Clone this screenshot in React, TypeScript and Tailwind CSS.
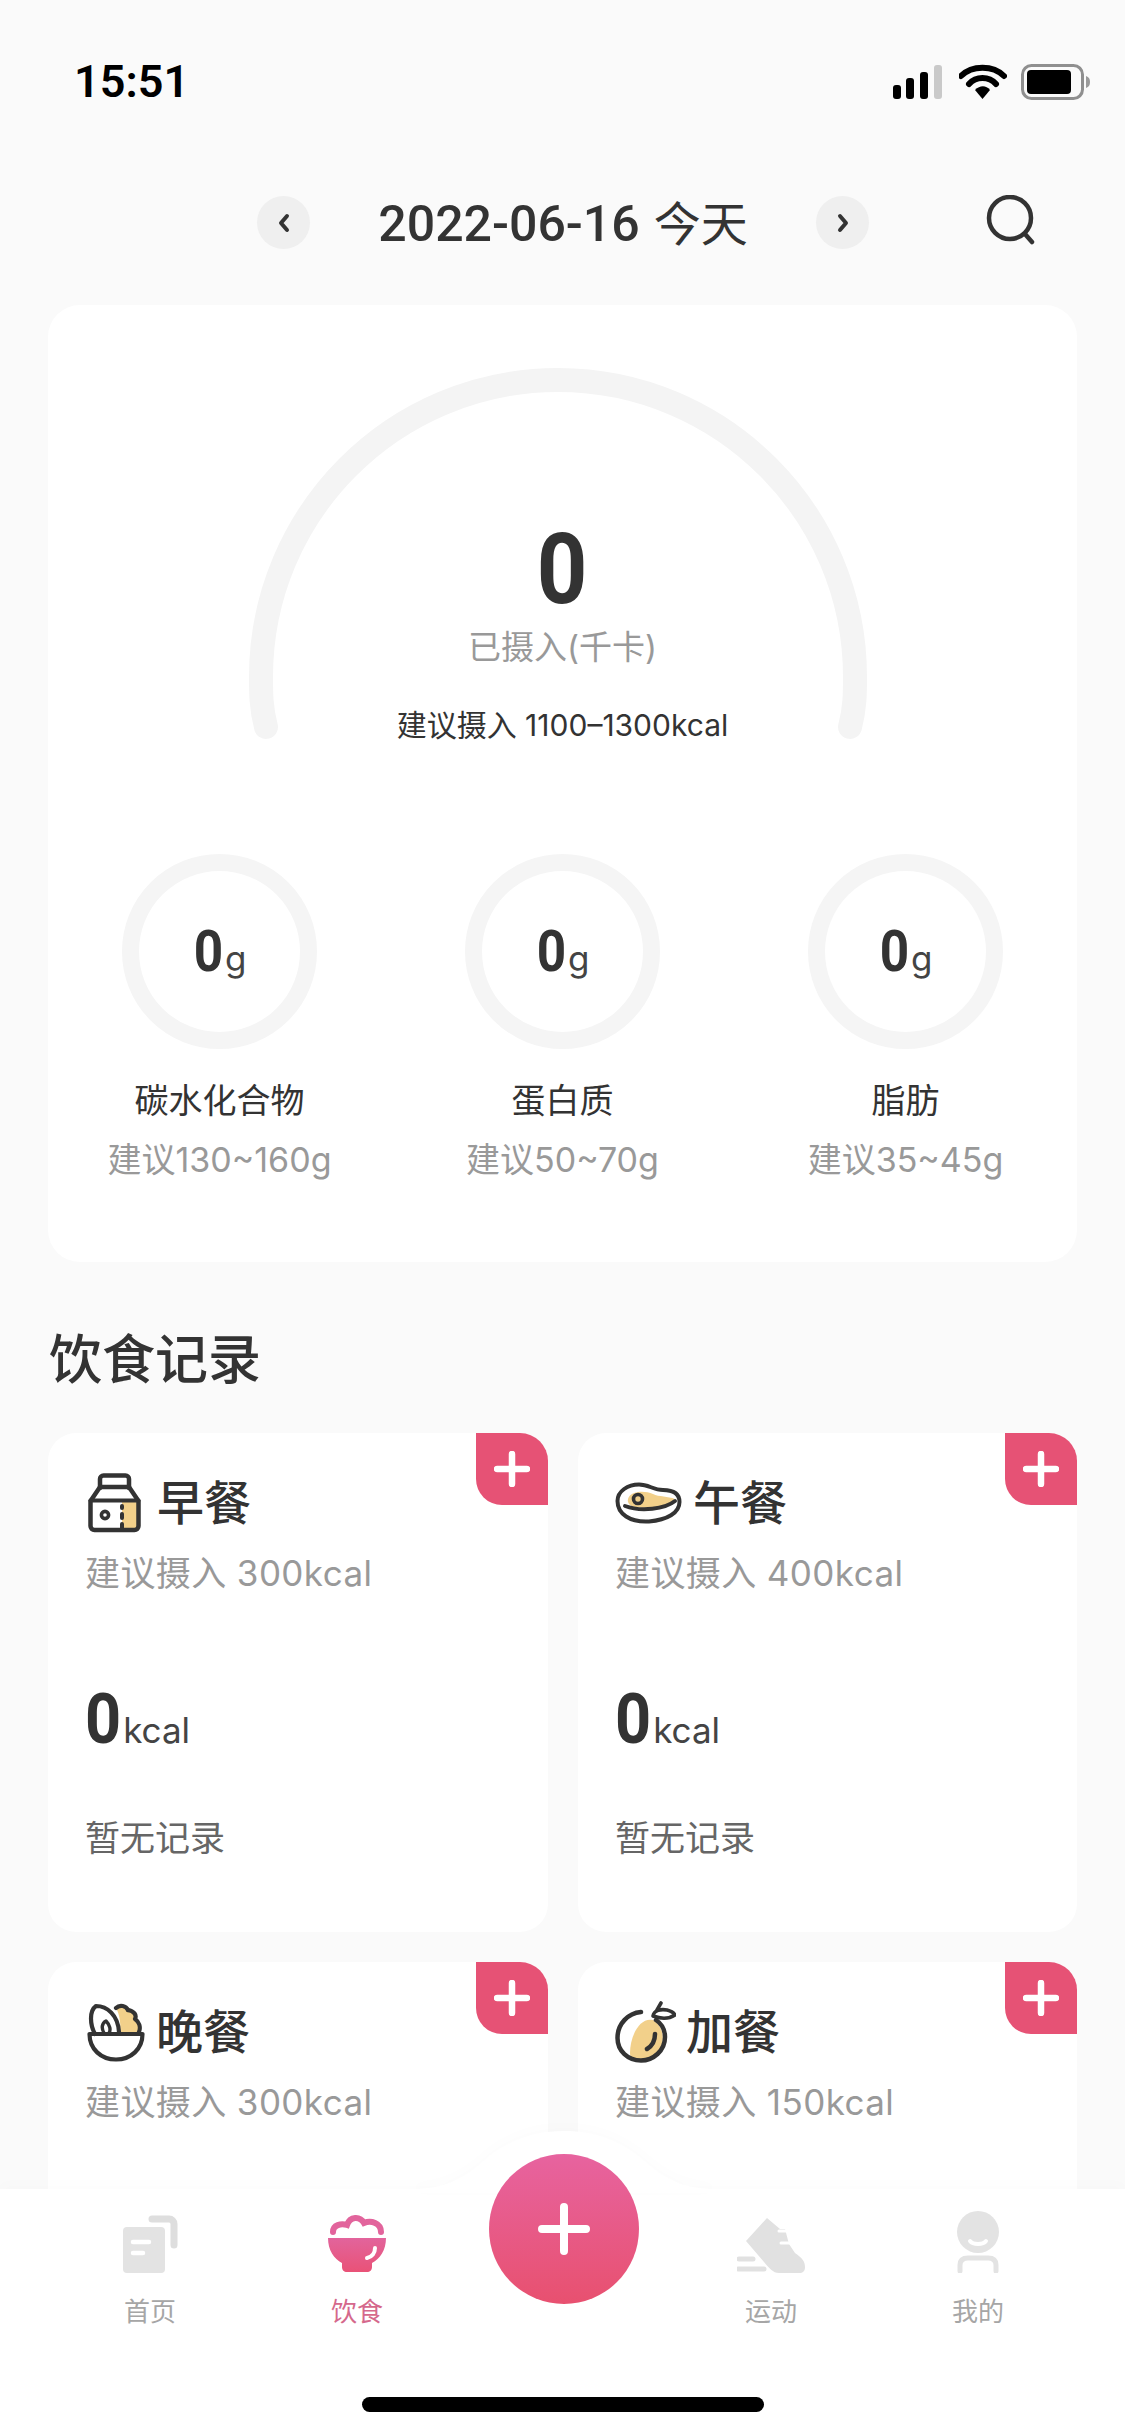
import React from "react";

const Plus = () => (
  <svg width="36" height="36" viewBox="0 0 36 36">
    <path d="M18 3V33M3 18H33" stroke="#fff" strokeWidth="6.5" strokeLinecap="round" />
  </svg>
);

const Milk = () => (
  <svg width="53" height="60" viewBox="0 0 53 60" fill="none" className="ml-[3px] mr-[16px]">
    <rect x="34" y="29" width="15" height="26" fill="#f2d08a" />
    <g stroke="#333" strokeWidth="4.5" strokeLinejoin="round" strokeLinecap="round">
      <path d="M12 15V6a3.5 3.5 0 0 1 3.5-3.5h22a3.5 3.5 0 0 1 3.5 3.5V15" />
      <path d="M12 14H41L50.5 28V53a4 4 0 0 1-4 4H6.5a4 4 0 0 1-4-4V28Z" />
      <path d="M2.5 27.5H50.5" strokeWidth="4" />
      <path d="M34 41V45" strokeWidth="4" />
      <path d="M34 33V35M34 51V55" strokeWidth="4" />
      <circle cx="17" cy="42" r="3.6" strokeWidth="3.6" />
    </g>
  </svg>
);

const Steak = () => (
  <svg width="67" height="42" viewBox="0 0 67 42" fill="none" className="mr-[11px]">
    <path d="M13 17C15 9 29 8 38 12C44 15 53 14 60 17C53 25 30 27 20 25C15 24 12 21 13 17Z" fill="#f2d08a" />
    <g stroke="#333" strokeLinecap="round">
      <path d="M2.5 19C2.5 9 13 2.5 24 2.5C34 2.5 38 8 48 8C58 8 64.5 11 64.5 20C64.5 31 52 38 34 39.5C15 40.500 2.5 32 2.500 19Z" strokeWidth="4" />
      <path d="M10 24C26 30 50 27 60 19" strokeWidth="4" />
      <circle cx="23" cy="17" r="4.500" strokeWidth="3.600" />
    </g>
  </svg>
);

const Bowl = () => (
  <svg width="58" height="59" viewBox="0 0 58 59" fill="none" className="ml-[2px] mr-[11px]">
    <path d="M29 5C33 1 39 3 41 7C47 8 50 12 48 16C52 19 53 24 52 31H33C34 22 33 12 29 5Z" fill="#f2d08a" />
    <g stroke="#333" strokeWidth="4.2" strokeLinecap="round" strokeLinejoin="round">
      <path d="M2.500 31H55.500C55.500 46 44 56.500 29 56.500C14 56.500 2.500 46 2.500 31Z" />
      <path d="M8 31C3 22 2 8 9 3C20 3 31 12 32 29" />
      <path d="M17 30C14 25 15 20 19 18C23 22 24 27 22 30" strokeWidth="3.400" />
      <path d="M29 5C33 1 39 3 41 7" />
      <path d="M41 7C47 8 50 12 48 16C52 19 54 24 52 29" />
    </g>
  </svg>
);

const Orange = () => (
  <svg width="61" height="62" viewBox="0 0 61 62" fill="none" className="mr-[10px]">
    <path d="M38 19C50 26 52 46 38 56C26 62 15 61 15 52C15 36 24 16 38 19Z" fill="#f2d08a" />
    <g stroke="#333" strokeLinecap="round" strokeLinejoin="round">
      <path d="M26 11C13 12 2.500 23 2.500 37C2.500 50 13 59.500 26 59.500C38 59.500 50 50 50 36C50 29 47 23 41 19" strokeWidth="4.500" />
      <path d="M38 15C39 9 46 8 52 9C56 10 59 12 60 14C54 18 46 18 38 15ZM42 9L46 2" strokeWidth="3.600" />
      <path d="M40 33C40 39 37 45 32 48" strokeWidth="4.500" />
    </g>
  </svg>
);

const meals = [
  { name: "早餐", icon: <Milk />, rec: "300" },
  { name: "午餐", icon: <Steak />, rec: "400" },
  { name: "晚餐", icon: <Bowl />, rec: "300" },
  { name: "加餐", icon: <Orange />, rec: "150" },
];

const macros = [
  { name: "碳水化合物", rec: "建议130~160g" },
  { name: "蛋白质", rec: "建议50~70g" },
  { name: "脂肪", rec: "建议35~45g" },
];

const Tab = ({ label, active, icon }: { label: string; active?: boolean; icon: React.ReactNode }) => (
  <div className="flex w-[120px] flex-col items-center">
    <div className="flex h-[62px] items-end justify-center">{icon}</div>
    <div className={`mt-[22px] text-[26px] leading-[34px] ${active ? "text-[#d5688c]" : "text-[#a6a6a6]"}`}>{label}</div>
  </div>
);

export default function App() {
  return (
    <div className="relative h-[2436px] w-[1125px] overflow-hidden bg-[#fafafa] [font-family:Inter,'Noto_Sans_CJK_SC',sans-serif] text-[#333]">
      {/* status bar */}
      <div className="flex h-[196px] items-start justify-between pl-[74px] pr-[34px] pt-[57px]">
        <div className="text-[45px] font-semibold leading-[50px] text-black [font-family:Roboto,sans-serif]">15:51</div>
        <div className="mt-[7px] flex items-center">
          <svg width="52" height="36" viewBox="0 0 52 36">
            <rect x="1" y="21" width="8" height="14" rx="3" fill="#000" />
            <rect x="14" y="14" width="8" height="21" rx="3" fill="#000" />
            <rect x="28" y="8" width="8" height="27" rx="3" fill="#000" />
            <rect x="42" y="1" width="8" height="34" rx="3" fill="#c9c9c9" />
          </svg>
          <svg width="48" height="36" viewBox="0 0 48 36" className="ml-[15px]">
            <path d="M2 12C13 1 34 1 45 12" fill="none" stroke="#000" strokeWidth="6" strokeLinecap="round" />
            <path d="M10 20C17 12 30 12 37 20" fill="none" stroke="#000" strokeWidth="6" strokeLinecap="round" />
            <path d="M16 26C21 21 27 21 31 26L23.500 35Z" fill="#000" />
          </svg>
          <svg width="70" height="36" viewBox="0 0 70 36" className="ml-[14px]">
            <rect x="1.500" y="1.500" width="60" height="33" rx="9" fill="none" stroke="#8f8f8f" strokeWidth="3" />
            <rect x="6" y="6" width="44" height="24" rx="4" fill="#000" />
            <path d="M65 12C68 13 69 15 69 18C69 21 68 23 65 24Z" fill="#9a9a9a" />
          </svg>
        </div>
      </div>

      {/* date header */}
      <div className="flex h-[53px] items-center pl-[257px]">
        <div className="flex h-[53px] w-[53px] items-center justify-center rounded-full bg-[#efefef]">
          <svg width="14" height="20" viewBox="0 0 14 20"><path d="M10 3L4 10L10 17" fill="none" stroke="#333" strokeWidth="4" strokeLinecap="round" strokeLinejoin="round" /></svg>
        </div>
        <div className="flex w-[506px] items-baseline justify-center text-[#333]">
          <span className="text-[50px] font-medium leading-[53px] [font-family:Roboto,sans-serif]">2022-06-16</span>
          <span className="ml-[14px] text-[47px] leading-[53px] [font-family:'Noto_Sans_CJK_SC',sans-serif]">今天</span>
        </div>
        <div className="flex h-[53px] w-[53px] items-center justify-center rounded-full bg-[#efefef]">
          <svg width="14" height="20" viewBox="0 0 14 20"><path d="M4 3L10 10L4 17" fill="none" stroke="#333" strokeWidth="4" strokeLinecap="round" strokeLinejoin="round" /></svg>
        </div>
        <svg width="52" height="50" viewBox="0 0 52 50" className="ml-[116px] -mt-[5px]">
          <circle cx="25" cy="23" r="21" fill="none" stroke="#333" strokeWidth="4.500" />
          <path d="M40 39L47 47" stroke="#333" strokeWidth="4.500" strokeLinecap="round" />
        </svg>
      </div>

      {/* summary card */}
      <div className="mx-[48px] mt-[56px] h-[957px] w-[1029px] rounded-[32px] bg-white pt-[63px]">
        <div className="relative h-[372px] text-center">
          <svg width="618" height="374" viewBox="0 0 618 374" className="absolute left-[201px] top-0">
            <path d="M17 359C12 340 12 325 12 309C12 145 145 12 309 12C473 12 606 145 606 309C606 325 606 340 601 359" fill="none" stroke="#f4f4f4" strokeWidth="24" strokeLinecap="round" />
          </svg>
          <div className="relative h-[265px] pt-[139px] leading-[126px]">
            <span className="inline-block scale-x-90 text-[98px] font-bold [font-family:Roboto,sans-serif]">0</span>
          </div>
          <div className="relative -mt-[9px] text-[33px] leading-[46px] text-[#999]">已摄入(千卡)</div>
          <div className="relative mt-[35px] text-[30px] leading-[40px] text-[#333]">建议摄入 1100–1300kcal</div>
        </div>
        <div className="mt-[114px] grid grid-cols-3">
          {macros.map((m) => (
            <div key={m.name} className="flex flex-col items-center">
              <div className="flex h-[195px] w-[195px] items-baseline justify-center rounded-full border-[17px] border-[#f5f5f5] pt-[49px]">
                <span className="inline-block scale-x-90 text-[57px] font-bold leading-[64px] [font-family:Roboto,sans-serif]">0</span>
                <span className="text-[35px] leading-[64px] text-[#444]">g</span>
              </div>
              <div className="mt-[28px] text-[34px] leading-[48px] text-[#333]">{m.name}</div>
              <div className="mt-[11px] text-[34px] leading-[48px] text-[#999]">{m.rec}</div>
            </div>
          ))}
        </div>
      </div>

      <div className="ml-[49px] mt-[63px] text-[53px] font-medium leading-[70px] text-[#333]">饮食记录</div>

      {/* meals */}
      <div className="mx-[48px] mt-[38px] grid grid-cols-[500px_499px] gap-x-[30px] gap-y-[30px]">
        {meals.map((m) => (
          <div key={m.name} className="relative h-[499px] rounded-[28px] bg-white pl-[37px] pt-[40px]">
            <div className="absolute right-0 top-0 flex h-[72px] w-[72px] items-center justify-center rounded-bl-[26px] rounded-tr-[28px] bg-[#e65275]">
              <Plus />
            </div>
            <div className="flex h-[60px] items-center">
              {m.icon}
              <span className="text-[47px] font-medium leading-[60px] text-[#333]">{m.name}</span>
            </div>
            <div className="mt-[16px] text-[35px] leading-[48px] tracking-[0.4px] text-[#999]">建议摄入 {m.rec}kcal</div>
            <div className="mt-[82px] flex items-baseline leading-[80px]">
              <span className="inline-block origin-left scale-x-90 text-[70px] font-bold [font-family:Roboto,sans-serif]">0</span>
              <span className="-ml-[2px] text-[35px] text-[#444]">kcal</span>
            </div>
            <div className="mt-[44px] text-[35px] leading-[48px] text-[#666]">暂无记录</div>
          </div>
        ))}
      </div>

      {/* tab bar */}
      <div className="absolute bottom-0 left-0 h-[247px] w-[1125px] bg-white shadow-[0_-6px_12px_rgba(0,0,0,0.012)]">
        <svg width="300" height="64" viewBox="0 0 300 64" className="absolute -top-[60px] left-[414px] drop-shadow-[0_-3px_6px_rgba(0,0,0,0.012)]">
          <path d="M0 60C30 60 50 50 70 32C92 12 120 2 150 2C180 2 208 12 230 32C250 50 270 60 300 60V64H0Z" fill="#fff" />
        </svg>
        <div className="relative flex pt-[22px]">
          <div className="ml-[90px]"><Tab label="首页" icon={
            <svg width="56" height="58" viewBox="0 0 56 58">
              <path d="M30 4H47a5 5 0 0 1 5 5V30" fill="none" stroke="#dedede" strokeWidth="7" strokeLinecap="round" />
              <rect x="1" y="12" width="42" height="46" rx="4" fill="#e3e3e3" />
              <path d="M11 27H27M11 38H21" stroke="#fff" strokeWidth="4.500" strokeLinecap="round" />
            </svg>
          } /></div>
          <div className="ml-[87px]"><Tab label="饮食" active icon={
            <svg width="60" height="59" viewBox="0 0 60 59">
              <defs>
                <linearGradient id="rice" x1="0" y1="0" x2="0" y2="1">
                  <stop offset="0" stopColor="#e2649c" />
                  <stop offset="1" stopColor="#e95277" />
                </linearGradient>
              </defs>
              <path d="M6 18C6 11 14 9 20 11C23 2 33 2 37 9C44 6 54 9 54 18" fill="none" stroke="#e2649c" strokeWidth="6" strokeLinecap="round" />
              <path d="M1 24H59C59 36 53 45 45 49V53C45 56 43 58 40 58H20C17 58 15 56 15 53V49C7 45 1 36 1 24Z" fill="url(#rice)" />
              <path d="M48 34C48 39 45 43 40 44" fill="none" stroke="#fff" strokeWidth="4" strokeLinecap="round" />
            </svg>
          } /></div>
          <div className="ml-[294px]"><Tab label="运动" icon={
            <svg width="68" height="56" viewBox="0 0 68 56">
              <path d="M30 1L43 12H48L52 27L58 36C65 41 68 44 68 50C68 54 66 56 62 56H42C36 56 32 51 27 45L9 24Z" fill="#e1e1e1" />
              <path d="M42 14H50M44 26H54" stroke="#fff" strokeWidth="3" strokeLinecap="round" />
              <path d="M2 42H16M1 52H27" stroke="#e1e1e1" strokeWidth="5" strokeLinecap="round" />
            </svg>
          } /></div>
          <div className="ml-[87px]"><Tab label="我的" icon={
            <svg width="44" height="62" viewBox="0 0 44 62">
              <circle cx="22" cy="21" r="21" fill="#e3e3e3" />
              <path d="M14 30C17 34 27 34 30 30" fill="none" stroke="#fff" strokeWidth="4" strokeLinecap="round" />
              <path d="M4 60V54C4 48 8 47 12 47H32C36 47 40 48 40 54V60" fill="none" stroke="#e3e3e3" strokeWidth="5" strokeLinecap="round" />
            </svg>
          } /></div>
        </div>
        <div className="absolute left-[362px] top-[208px] h-[15px] w-[402px] rounded-full bg-black" />
      </div>

      {/* add button */}
      <div className="absolute left-[489px] top-[2154px] flex h-[150px] w-[150px] items-center justify-center rounded-full bg-gradient-to-b from-[#e7639f] to-[#e8506f]">
        <svg width="52" height="52" viewBox="0 0 52 52">
          <path d="M26 4V48M4 26H48" stroke="#fff" strokeWidth="8" strokeLinecap="round" />
        </svg>
      </div>
    </div>
  );
}
